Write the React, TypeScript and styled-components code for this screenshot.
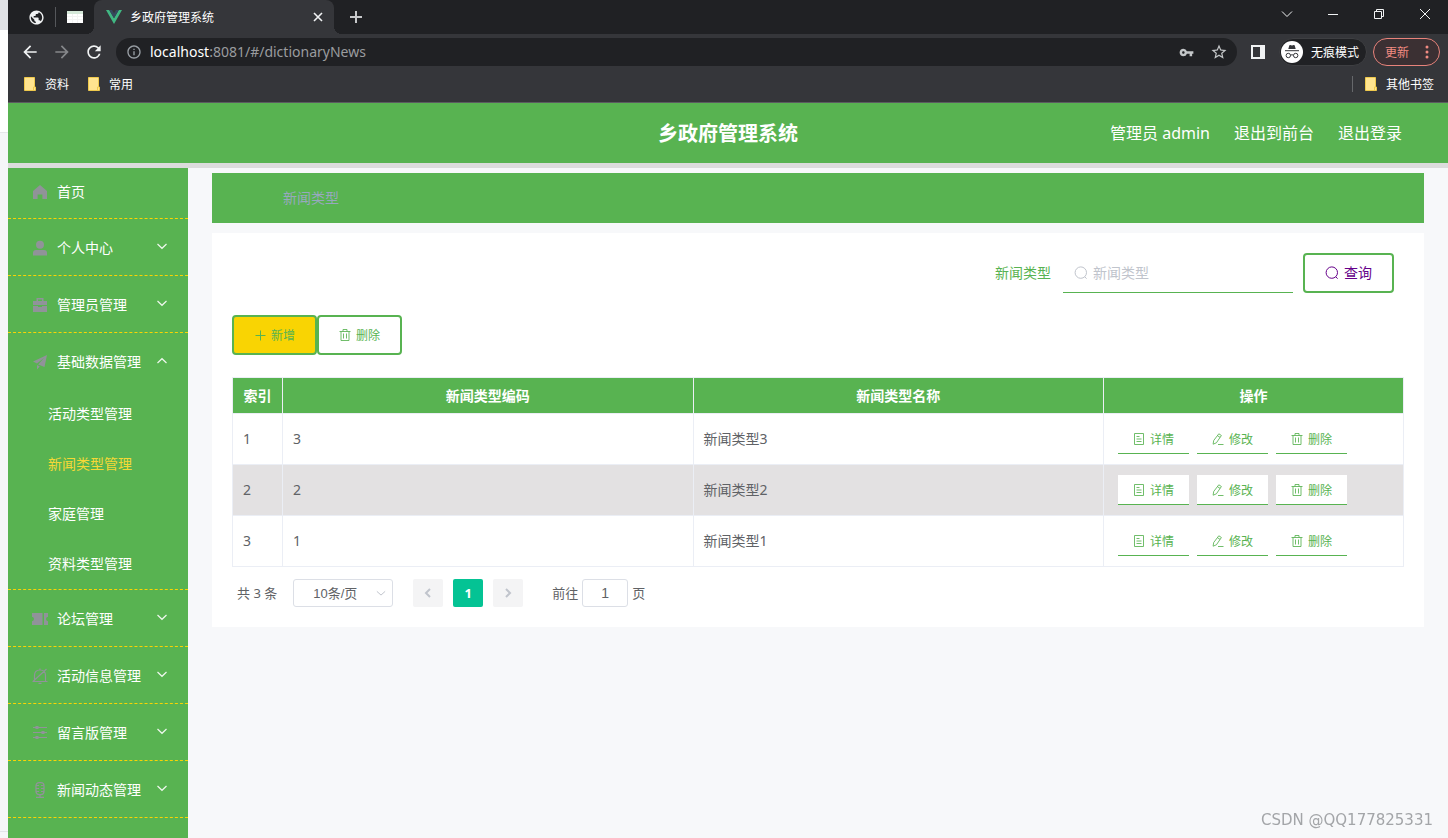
import React from "react";
import styled, { createGlobalStyle, css } from "styled-components";
import {
  MdArrowBack,
  MdArrowForward,
  MdInfoOutline,
  MdPublic,
  MdRefresh,
  MdStarBorder,
  MdVpnKey,
} from "react-icons/md";

const green = "#58b351";
const gold = "#f9d403";
const ui = `"Noto Sans", "Noto Sans CJK SC", sans-serif`;
const han = `"Noto Sans CJK SC", sans-serif`;

const GlobalStyle = createGlobalStyle`
  *, *::before, *::after { box-sizing: border-box; }
  body { margin: 0; background: #f7f8fa; font-family: ${ui}; font-size: 14px; line-height: 20px; }
  button, input, select { font-family: inherit; margin: 0; }
  button { cursor: pointer; }
  a { text-decoration: none; color: inherit; }
  svg { display: block; flex: none; }
`;

/* ---------- page frame ---------- */

const Screen = styled.div`
  display: flex;
  min-height: 100vh;
`;

const Backdrop = styled.div`
  flex: none;
  width: 8px;
  display: flex;
  flex-direction: column;
  background: #f5f6f8;
`;

const BackdropBand = styled.div<{ $h: number; $bg: string }>`
  height: ${(p) => p.$h}px;
  background: ${(p) => p.$bg};
`;

const BackdropRest = styled.div`
  flex: 1;
  margin-bottom: 6px;
  border-top: 1px solid #e6e7ea;
  border-bottom: 1px solid #e2e4e8;
`;

const Browser = styled.div`
  flex: 1;
  min-width: 0;
  display: flex;
  flex-direction: column;
`;

/* ---------- browser chrome ---------- */

const TabStrip = styled.div`
  display: flex;
  align-items: center;
  height: 34px;
  background: #202124;
  color: #fff;
`;

const PinnedTab = styled.button`
  width: 38px;
  height: 34px;
  padding: 0;
  border: 0;
  background: none;
  color: #f1f3f4;
  display: grid;
  place-items: center;
  &:first-child {
    width: 47px;
    padding-left: 9px;
  }
`;

const TabDivider = styled.span`
  width: 1px;
  height: 20px;
  background: #55575b;
`;

const ActiveTab = styled.div`
  position: relative;
  display: flex;
  align-items: center;
  gap: 8px;
  width: 240px;
  height: 34px;
  padding: 0 10px 0 12px;
  background: #35363a;
  border-radius: 8px 8px 0 0;
  font-family: ${han};
  font-size: 12px;
  &::before,
  &::after {
    content: "";
    position: absolute;
    bottom: 0;
    width: 8px;
    height: 8px;
  }
  &::before {
    left: -8px;
    background: radial-gradient(circle at 0 0, transparent 8px, #35363a 8px);
  }
  &::after {
    right: -8px;
    background: radial-gradient(circle at 100% 0, transparent 8px, #35363a 8px);
  }
`;

const TabTitle = styled.span`
  flex: 1;
`;

const GlyphButton = styled.button<{ $w: number; $h?: number; $dim?: boolean }>`
  flex: none;
  width: ${(p) => p.$w}px;
  height: ${(p) => p.$h ?? 28}px;
  padding: 0;
  border: 0;
  background: none;
  color: ${(p) => (p.$dim ? "#86888b" : "#f1f3f4")};
  display: grid;
  place-items: center;
`;

const WindowButtons = styled.div`
  display: flex;
  margin-left: auto;
  align-self: flex-start;
`;

const Toolbar = styled.div`
  display: flex;
  align-items: center;
  height: 36px;
  padding: 0 8px 0 6px;
  background: #35363a;
`;

const AddressBar = styled.div`
  flex: 1;
  display: flex;
  align-items: center;
  height: 28px;
  margin-left: 6px;
  padding: 0 2px 0 10px;
  gap: 8px;
  border-radius: 14px;
  background: #202124;
  color: #9aa0a6;
  font-size: 14px;
`;

const AddressText = styled.span`
  flex: 1;
  color: #9a9c9f;
  b {
    font-weight: 400;
    color: #fff;
  }
`;

const AddressActions = styled.div`
  display: flex;
`;

const Chip = styled.button<{ $alert?: boolean }>`
  display: flex;
  align-items: center;
  height: 28px;
  gap: 8px;
  margin-left: ${(p) => (p.$alert ? 6 : 0)}px;
  padding: 0 ${(p) => (p.$alert ? "10px 0 11px" : "7px 0 1px")};
  border: 1px solid ${(p) => (p.$alert ? "#e8837b" : "#3e3f42")};
  border-radius: 14px;
  background: ${(p) => (p.$alert ? "#3b3033" : "#202124")};
  color: ${(p) => (p.$alert ? "#f28b82" : "#fff")};
  font-family: ${han};
  font-size: 12px;
  line-height: 20px;
`;

const Spacer = styled.span`
  flex: 1;
`;

const Bookmarks = styled.div`
  display: flex;
  align-items: center;
  gap: 19px;
  height: 33px;
  padding: 0 14px 4px 16px;
  background: #35363a;
  border-bottom: 1px solid #5b5c60;
  color: #fff;
  font-family: ${han};
  font-size: 12px;
`;

const Bookmark = styled.a`
  display: flex;
  align-items: center;
  gap: 9px;
`;

const OtherBookmarks = styled(Bookmark)`
  margin-left: auto;
  padding-left: 12px;
  border-left: 1px solid #66686b;
  line-height: 16px;
`;

/* ---------- application ---------- */

const AppHeader = styled.header`
  display: grid;
  grid-template-columns: 1fr auto 1fr;
  align-items: center;
  height: 60px;
  background: ${green};
  color: #fff;
`;

const AppTitle = styled.h1`
  grid-column: 2;
  margin: 0;
  font-family: ${han};
  font-size: 20px;
  line-height: 28px;
  font-weight: 700;
`;

const UserNav = styled.nav`
  display: flex;
  justify-content: flex-end;
  gap: 24px;
  padding-right: 46px;
  font-size: 16px;
  white-space: nowrap;
`;

const HeaderShade = styled.div`
  height: 5px;
  background: #dcdcdc;
`;

const Body = styled.div`
  flex: 1;
  display: flex;
`;

const Sidebar = styled.nav`
  flex: none;
  width: 180px;
  background: ${green};
  color: #fff;
`;

const MenuGroup = styled.div`
  border-bottom: 1px dashed ${gold};
`;

const MenuItem = styled.a<{ $short?: boolean }>`
  display: flex;
  align-items: center;
  height: ${(p) => (p.$short ? 50 : 56)}px;
  padding: 0 20px ${(p) => (p.$short ? 4 : 0)}px;
`;

const MenuIcon = styled.span`
  width: 24px;
  margin-right: 5px;
  padding-top: 2px;
  display: grid;
  place-items: center;
  color: #909399;
`;

const MenuLabel = styled.span`
  flex: 1;
  font-family: ${han};
`;

const MenuArrow = styled.span`
  padding-bottom: 2px;
  color: #eef7ed;
`;

const SubItem = styled.a<{ $active?: boolean }>`
  display: flex;
  align-items: center;
  height: 50px;
  padding-left: 40px;
  color: ${(p) => (p.$active ? "#f5d836" : "#fff")};
`;

const Main = styled.main`
  flex: 1;
  min-width: 0;
  padding: 5px 24px;
`;

const Breadcrumb = styled.div`
  display: flex;
  align-items: center;
  height: 50px;
  margin-bottom: 10px;
  padding-left: 71px;
  background: ${green};
  color: #97a8be;
`;

const Card = styled.section`
  padding: 20px;
  background: #fff;
`;

const SearchRow = styled.form`
  display: flex;
  justify-content: flex-end;
  align-items: center;
  padding-right: 10px;
  margin-bottom: 22px;
  label {
    color: ${green};
    margin-right: 12px;
  }
`;

const SearchField = styled.div`
  display: flex;
  align-items: center;
  gap: 5px;
  width: 230px;
  height: 40px;
  margin-right: 10px;
  padding-left: 11px;
  border-bottom: 1px solid ${green};
  color: #c0c4cc;
  input {
    flex: 1;
    min-width: 0;
    padding: 0;
    border: 0;
    outline: 0;
    background: none;
    font-size: 14px;
    line-height: 20px;
    color: #606266;
  }
  input::placeholder {
    color: #c0c4cc;
    opacity: 1;
  }
`;

const OutlineButton = styled.button<{ $tone?: "gold" | "query" }>`
  display: flex;
  align-items: center;
  gap: 5px;
  height: 40px;
  padding: 0 20px;
  border: 2px solid ${green};
  border-radius: 4px;
  background: ${(p) => (p.$tone === "gold" ? gold : "#fff")};
  color: ${green};
  font-family: ${han};
  font-size: 12px;
  line-height: 20px;
  ${(p) =>
    p.$tone === "query" &&
    css`
      color: #66008a;
      font-family: ${ui};
      font-size: 14px;
    `}
`;

const ButtonRow = styled.div`
  display: flex;
  margin-bottom: 22px;
`;

const DataTable = styled.table`
  width: 100%;
  table-layout: fixed;
  border-collapse: separate;
  border-spacing: 0;
  border-top: 1px solid #ebeef5;
  border-left: 1px solid #ebeef5;
  color: #606266;
  th,
  td {
    padding: 0 10px;
    border-right: 1px solid #ebeef5;
    border-bottom: 1px solid #ebeef5;
    text-align: left;
  }
  th {
    height: 36px;
    background: ${green};
    color: #fff;
    font-weight: 700;
    text-align: center;
    white-space: nowrap;
  }
  td {
    height: 51px;
  }
  tbody tr:nth-child(2) td {
    background: #e3e1e2;
  }
`;

const Col = styled.col<{ $w?: number }>`
  width: ${(p) => (p.$w ? `${p.$w}px` : "auto")};
`;

const RowActions = styled.div`
  display: flex;
  gap: 8px;
  padding-left: 4px;
`;

const RowButton = styled.button`
  display: flex;
  align-items: center;
  gap: 5px;
  height: 30px;
  padding: 0 15px;
  border: 0;
  border-bottom: 1px solid ${green};
  background: #fff;
  color: ${green};
  font-family: ${han};
  font-size: 12px;
  line-height: 20px;
`;

const Pagination = styled.nav`
  display: flex;
  align-items: center;
  margin-top: 12px;
  padding-left: 5px;
  color: #606266;
  font-size: 13px;
`;

const SizePicker = styled.div`
  display: grid;
  align-items: center;
  width: 100px;
  margin: 0 20px 0 16px;
  > * {
    grid-area: 1 / 1;
  }
  select {
    appearance: none;
    width: 100%;
    height: 28px;
    padding: 0 19px;
    border: 1px solid #dcdfe6;
    border-radius: 3px;
    background: #fff;
    color: #606266;
    font: 13px "Liberation Sans", "Noto Sans CJK SC", sans-serif;
  }
  svg {
    justify-self: end;
    margin-right: 7px;
    color: #c0c4cc;
    pointer-events: none;
  }
`;

const Pages = styled.div`
  display: flex;
  gap: 10px;
  margin-right: 29px;
`;

const PageButton = styled.button<{ $active?: boolean }>`
  width: 30px;
  height: 28px;
  padding: 0;
  border: 0;
  border-radius: 2px;
  display: grid;
  place-items: center;
  background: ${(p) => (p.$active ? "#04c394" : "#f4f4f5")};
  color: ${(p) => (p.$active ? "#fff" : "#c0c4cc")};
  font-size: 13px;
  font-weight: 700;
`;

const Jump = styled.label`
  display: flex;
  align-items: center;
  gap: 4px;
  input {
    width: 46px;
    height: 28px;
    padding: 0;
    border: 1px solid #dcdfe6;
    border-radius: 3px;
    text-align: center;
    color: #606266;
    font: 14px "Liberation Sans", sans-serif;
  }
`;

const Watermark = styled.div`
  position: fixed;
  right: 15px;
  bottom: 8px;
  color: #a3a5a8;
  font: 15px/20px "DejaVu Sans", sans-serif;
`;

/* ---------- drawings ---------- */

type StrokeProps = { size: number; box?: number; w?: number; children: React.ReactNode };

const Stroke = ({ size, box, w = 1, children }: StrokeProps) => (
  <svg
    width={size}
    height={size}
    viewBox={`0 0 ${box ?? size} ${box ?? size}`}
    fill="none"
    stroke="currentColor"
    strokeWidth={w}
    aria-hidden="true"
  >
    {children}
  </svg>
);

const ChevronDown = () => (
  <Stroke size={12} w={1.2}>
    <path d="M1.500 4l4.500 4.300L10.500 4" />
  </Stroke>
);
const ChevronUp = () => (
  <Stroke size={12} w={1.2}>
    <path d="M1.500 9L6 4.700 10.500 9" />
  </Stroke>
);
const SearchGlyph = () => (
  <Stroke size={14}>
    <circle cx="6.8" cy="6.6" r="5.7" />
    <path d="M10.8 10.8l1.8 1.9" />
  </Stroke>
);
const PlusGlyph = () => (
  <Stroke size={12}>
    <path d="M6.500 1.500v10M1.500 6.500h10" />
  </Stroke>
);
const TrashGlyph = () => (
  <Stroke size={12}>
    <path d="M.5 2.500h11M4 2.500v-2h4v2M2 2.500v9h8v-9M4.500 4.500v5M7.500 4.500v5" strokeOpacity="0.85" />
  </Stroke>
);
const DetailGlyph = () => (
  <Stroke size={12}>
    <path d="M1.500 .5h9v11h-9zM3.500 3.500h3M3.500 6h5M3.500 8.500h5" strokeOpacity="0.85" />
  </Stroke>
);
const EditGlyph = () => (
  <Stroke size={12}>
    <path
      d="M6.800 .8l2.600 1.700-5 7.300-3.300 1.400.6-3.700zM5.500 2.700l2.600 1.700M6 11.500h5.500"
      strokeOpacity="0.85"
    />
  </Stroke>
);

const HomeIcon = () => (
  <svg width="16" height="16" viewBox="0 0 16 16" fill="currentColor">
    <path d="M8 1L1 7v8h4.600v-4.500h4.800V15H15V7z" />
  </svg>
);
const UserIcon = () => (
  <svg width="16" height="16" viewBox="0 0 16 16" fill="currentColor">
    <circle cx="8" cy="4.800" r="4" />
    <path d="M1 15.500v-2.500q0-3 3-3h8q3 0 3 3v2.500z" />
  </svg>
);
const CaseIcon = () => (
  <svg width="16" height="16" viewBox="0 0 16 16" fill="currentColor">
    <path d="M4.500 4V1h7v3H15v4H1V4zm1.500 0h4V2.500H6zM1 9h5v1h4V9h5v6H1z" />
  </svg>
);
const PlaneIcon = () => (
  <svg width="16" height="16" viewBox="0 0 16 16" fill="currentColor">
    <path d="M15 1L1 7.500l4 2L12 4 6.200 10.500 12.500 13zM5 11v4.500l2.800-3z" />
  </svg>
);
const TicketIcon = () => (
  <svg width="16" height="16" viewBox="0 0 16 16" fill="currentColor">
    <path d="M0 2h10.500v12H0v-3.800q2-.5 2-2.200T0 5.800zM12 2h4v3.800q-2 .5-2 2.200t2 2.200V14h-4z" />
  </svg>
);
const BellOffIcon = () => (
  <Stroke size={16} w={1.2}>
    <path d="M2.500 13V7.500q0-5.500 5.500-5.500t5.500 5.500V13M.5 13.500h15M8 .5V2M6.500 15.400h3M1 13.500L14.500 1" />
  </Stroke>
);
const SlidersIcon = () => (
  <Stroke size={16}>
    <path d="M1 2.500h14M1 7.500h14M1 12.500h14" />
    <path d="M3.500 2.500h3M9.500 7.500h3M3.500 12.500h3" strokeWidth="3" />
  </Stroke>
);
const MicIcon = () => (
  <Stroke size={16} w={1.2}>
    <rect x="4" y=".6" width="8" height="12" rx="3" />
    <path d="M4 3.500h3M9 3.500h3M4 6.500h3M9 6.500h3M4 9.500h3M9 9.500h3M8 12.500v3M4 15.400h8" />
  </Stroke>
);

const VueLogo = () => (
  <svg width="16" height="14" viewBox="0 0 16 14" aria-hidden="true">
    <path d="M0 0h3.200L8 8.300 12.800 0H16L8 14z" fill="#41b883" />
    <path d="M3.200 0H6l2 3.500L10 0h2.800L8 8.300z" fill="#35495e" />
  </svg>
);
const SheetIcon = () => (
  <svg width="16" height="12" viewBox="0 0 16 12" aria-hidden="true">
    <path d="M0 0h16v12H0z" fill="#fff" />
    <path d="M0 0h16v3H0z" fill="#d5e8d9" />
    <path d="M0 5.500h16M0 8.500h16M5.500 3v9M10.500 3v9" stroke="#f3f3f3" />
  </svg>
);
const FolderIcon = () => (
  <svg width="12" height="14" viewBox="0 0 12 14" aria-hidden="true">
    <path d="M.5.5h10v9.500h1v3.500H.5z" fill="#ffe48f" stroke="#efc94c" />
    <path d="M9.500 13v-3h1" fill="none" stroke="#efc94c" />
  </svg>
);
const PanelIcon = () => (
  <svg width="14" height="14" viewBox="0 0 14 14" aria-hidden="true">
    <path d="M0 0h14v14H0zM2 2v10h7V2z" fill="currentColor" fillRule="evenodd" />
  </svg>
);
const IncognitoIcon = () => (
  <svg width="22" height="22" viewBox="0 0 22 22" aria-hidden="true">
    <circle cx="11" cy="11" r="11" fill="#fff" />
    <path d="M7.300 8l1-3.500q.2-.6.9-.4l1.800.5 1.800-.5q.7-.2.9.4l1 3.500z" fill="#35363a" />
    <path d="M4 9.700h14M9.400 14.200q1.600-.9 3.200 0" fill="none" stroke="#35363a" />
    <g fill="none" stroke="#35363a">
      <circle cx="7.300" cy="14.500" r="2.200" />
      <circle cx="14.700" cy="14.500" r="2.200" />
    </g>
  </svg>
);
const DotsIcon = () => (
  <svg width="4" height="14" viewBox="0 0 4 14" fill="currentColor" aria-hidden="true">
    <circle cx="2" cy="2" r="1.500" />
    <circle cx="2" cy="7" r="1.500" />
    <circle cx="2" cy="12" r="1.500" />
  </svg>
);

/* ---------- data ---------- */

type Menu = {
  label: string;
  icon: React.ReactNode;
  leaf?: boolean;
  children?: string[];
};

const menus: Menu[] = [
  { label: "首页", icon: <HomeIcon />, leaf: true },
  { label: "个人中心", icon: <UserIcon /> },
  { label: "管理员管理", icon: <CaseIcon /> },
  {
    label: "基础数据管理",
    icon: <PlaneIcon />,
    children: ["活动类型管理", "新闻类型管理", "家庭管理", "资料类型管理"],
  },
  { label: "论坛管理", icon: <TicketIcon /> },
  { label: "活动信息管理", icon: <BellOffIcon /> },
  { label: "留言版管理", icon: <SlidersIcon /> },
  { label: "新闻动态管理", icon: <MicIcon /> },
];

const rows = [
  { index: 1, code: "3", name: "新闻类型3" },
  { index: 2, code: "2", name: "新闻类型2" },
  { index: 3, code: "1", name: "新闻类型1" },
];

/* ---------- sections ---------- */

const BrowserChrome = () => (
  <>
    <TabStrip>
      <PinnedTab aria-label="固定标签页">
        <MdPublic size={17} />
      </PinnedTab>
      <TabDivider />
      <PinnedTab aria-label="固定标签页">
        <SheetIcon />
      </PinnedTab>
      <ActiveTab>
        <VueLogo />
        <TabTitle>乡政府管理系统</TabTitle>
        <GlyphButton $w={12} aria-label="关闭标签页">
          <Stroke size={10} w={1.6}>
            <path d="M1 1l8 8M9 1l-8 8" />
          </Stroke>
        </GlyphButton>
      </ActiveTab>
      <GlyphButton $w={44} aria-label="新标签页">
        <Stroke size={12} w={2}>
          <path d="M6 0v12M0 6h12" strokeOpacity="0.8" />
        </Stroke>
      </GlyphButton>
      <WindowButtons>
        <GlyphButton $w={46} aria-label="搜索标签页">
          <Stroke size={12}>
            <path d="M1 3.500l5 5 5-5" />
          </Stroke>
        </GlyphButton>
        <GlyphButton $w={46} aria-label="最小化">
          <Stroke size={12}>
            <path d="M1 6.500h10" />
          </Stroke>
        </GlyphButton>
        <GlyphButton $w={46} aria-label="还原">
          <Stroke size={12}>
            <path d="M1.500 3.500h7v7h-7zM3.500 3.500v-2h7v7h-2" />
          </Stroke>
        </GlyphButton>
        <GlyphButton $w={46} aria-label="关闭">
          <Stroke size={12}>
            <path d="M1 1l10 10M11 1L1 11" />
          </Stroke>
        </GlyphButton>
      </WindowButtons>
    </TabStrip>
    <Toolbar>
      <GlyphButton $w={32} aria-label="后退">
        <MdArrowBack size={20} />
      </GlyphButton>
      <GlyphButton $w={32} $dim aria-label="前进">
        <MdArrowForward size={20} />
      </GlyphButton>
      <GlyphButton $w={32} aria-label="刷新">
        <MdRefresh size={20} />
      </GlyphButton>
      <AddressBar>
        <MdInfoOutline size={16} />
        <AddressText>
          <b>localhost</b>:8081/#/dictionaryNews
        </AddressText>
        <AddressActions>
          <GlyphButton $w={32} aria-label="密码">
            <MdVpnKey size={15} color="#c4c7c9" />
          </GlyphButton>
          <GlyphButton $w={32} aria-label="收藏">
            <MdStarBorder size={18} color="#c4c7c9" />
          </GlyphButton>
        </AddressActions>
      </AddressBar>
      <GlyphButton $w={42} aria-label="侧边栏">
        <PanelIcon />
      </GlyphButton>
      <Chip>
        <IncognitoIcon />
        无痕模式
      </Chip>
      <Chip $alert>
        更新
        <Spacer />
        <DotsIcon />
      </Chip>
    </Toolbar>
    <Bookmarks>
      <Bookmark href="#">
        <FolderIcon />
        资料
      </Bookmark>
      <Bookmark href="#">
        <FolderIcon />
        常用
      </Bookmark>
      <OtherBookmarks href="#">
        <FolderIcon />
        其他书签
      </OtherBookmarks>
    </Bookmarks>
  </>
);

const SideMenu = () => (
  <Sidebar>
    {menus.map((m) => (
      <MenuGroup key={m.label}>
        <MenuItem href="#" $short={m.leaf}>
          <MenuIcon>{m.icon}</MenuIcon>
          <MenuLabel>{m.label}</MenuLabel>
          {!m.leaf && <MenuArrow>{m.children ? <ChevronUp /> : <ChevronDown />}</MenuArrow>}
        </MenuItem>
        {m.children?.map((c) => (
          <SubItem key={c} href="#" $active={c === "新闻类型管理"}>
            {c}
          </SubItem>
        ))}
      </MenuGroup>
    ))}
  </Sidebar>
);

const NewsTypeTable = () => (
  <DataTable>
    <colgroup>
      <Col $w={50} />
      <Col />
      <Col />
      <Col $w={300} />
    </colgroup>
    <thead>
      <tr>
        <th>索引</th>
        <th>新闻类型编码</th>
        <th>新闻类型名称</th>
        <th>操作</th>
      </tr>
    </thead>
    <tbody>
      {rows.map((r) => (
        <tr key={r.index}>
          <td>{r.index}</td>
          <td>{r.code}</td>
          <td>{r.name}</td>
          <td>
            <RowActions>
              <RowButton>
                <DetailGlyph />
                详情
              </RowButton>
              <RowButton>
                <EditGlyph />
                修改
              </RowButton>
              <RowButton>
                <TrashGlyph />
                删除
              </RowButton>
            </RowActions>
          </td>
        </tr>
      ))}
    </tbody>
  </DataTable>
);

const Pager = () => (
  <Pagination aria-label="分页">
    <span>共 3 条</span>
    <SizePicker>
      <select aria-label="每页条数" defaultValue="10">
        <option value="10">10条/页</option>
        <option value="20">20条/页</option>
      </select>
      <Stroke size={10} box={12} w={1.2}>
        <path d="M1 4l5 4.500 5-4.500" />
      </Stroke>
    </SizePicker>
    <Pages>
      <PageButton aria-label="上一页">
        <Stroke size={12} w={2}>
          <path d="M8 2L4 6l4 4" />
        </Stroke>
      </PageButton>
      <PageButton $active>1</PageButton>
      <PageButton aria-label="下一页">
        <Stroke size={12} w={2}>
          <path d="M4 2l4 4-4 4" />
        </Stroke>
      </PageButton>
    </Pages>
    <Jump>
      前往
      <input defaultValue="1" />
      页
    </Jump>
  </Pagination>
);

export default function App() {
  return (
    <>
      <GlobalStyle />
      <Screen>
        <Backdrop>
          <BackdropBand $h={30} $bg="#e0e2e6" />
          <BackdropBand $h={102} $bg="#fff" />
          <BackdropRest />
        </Backdrop>
        <Browser>
          <BrowserChrome />
          <AppHeader>
            <AppTitle>乡政府管理系统</AppTitle>
            <UserNav>
              <span>管理员 admin</span>
              <a href="#">退出到前台</a>
              <a href="#">退出登录</a>
            </UserNav>
          </AppHeader>
          <HeaderShade />
          <Body>
            <SideMenu />
            <Main>
              <Breadcrumb>新闻类型</Breadcrumb>
              <Card>
                <SearchRow onSubmit={(e) => e.preventDefault()}>
                  <label htmlFor="news-type">新闻类型</label>
                  <SearchField>
                    <SearchGlyph />
                    <input id="news-type" placeholder="新闻类型" />
                  </SearchField>
                  <OutlineButton $tone="query">
                    <SearchGlyph />
                    查询
                  </OutlineButton>
                </SearchRow>
                <ButtonRow>
                  <OutlineButton $tone="gold">
                    <PlusGlyph />
                    新增
                  </OutlineButton>
                  <OutlineButton>
                    <TrashGlyph />
                    删除
                  </OutlineButton>
                </ButtonRow>
                <NewsTypeTable />
                <Pager />
              </Card>
            </Main>
          </Body>
        </Browser>
      </Screen>
      <Watermark>CSDN @QQ177825331</Watermark>
    </>
  );
}
